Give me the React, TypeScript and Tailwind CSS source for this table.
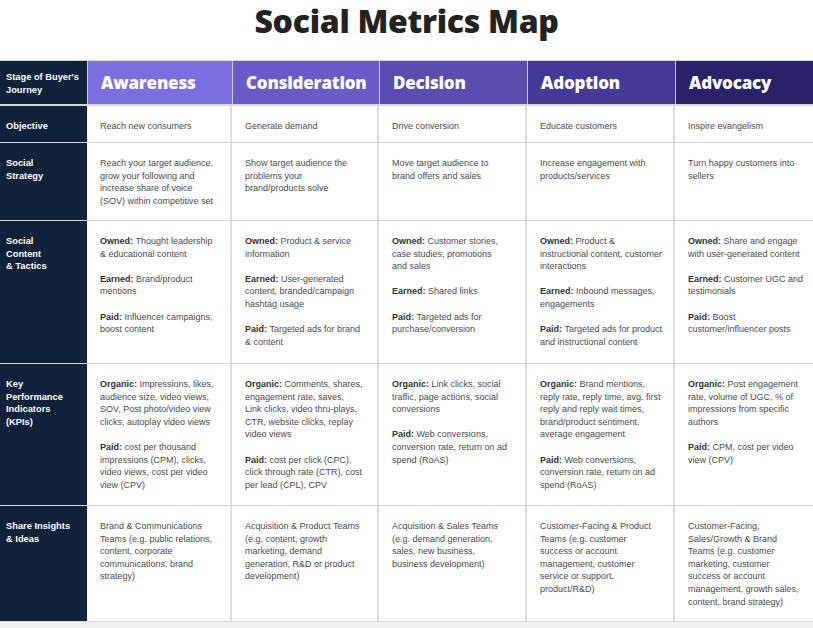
import React from 'react';

type Seg = { tag?: string; text: string };

const STAGES = [
  { name: 'Awareness', bg: 'bg-[#7b6ee0]' },
  { name: 'Consideration', bg: 'bg-[#6a5cc8]' },
  { name: 'Decision', bg: 'bg-[#5a4db0]' },
  { name: 'Adoption', bg: 'bg-[#443996]' },
  { name: 'Advocacy', bg: 'bg-[#2a2268]' },
];

const ROWS: { label: string; height: string; cells: Seg[][] }[] = [
  {
    label: 'Objective',
    height: 'h-[37px]',
    cells: [
      [{ text: 'Reach new consumers' }],
      [{ text: 'Generate demand' }],
      [{ text: 'Drive conversion' }],
      [{ text: 'Educate customers' }],
      [{ text: 'Inspire evangelism' }],
    ],
  },
  {
    label: 'Social\nStrategy',
    height: 'h-[78px]',
    cells: [
      [{ text: 'Reach your target audience,\ngrow your following and\nincrease share of voice\n(SOV) within competitive set' }],
      [{ text: 'Show target audience the\nproblems your\nbrand/products solve' }],
      [{ text: 'Move target audience to\nbrand offers and sales' }],
      [{ text: 'Increase engagement with\nproducts/services' }],
      [{ text: 'Turn happy customers into\nsellers' }],
    ],
  },
  {
    label: 'Social\nContent\n& Tactics',
    height: 'h-[143px]',
    cells: [
      [
        { tag: 'Owned:', text: 'Thought leadership\n& educational content' },
        { tag: 'Earned:', text: 'Brand/product\nmentions' },
        { tag: 'Paid:', text: 'Influencer campaigns,\nboost content' },
      ],
      [
        { tag: 'Owned:', text: 'Product & service\ninformation' },
        { tag: 'Earned:', text: 'User-generated\ncontent, branded/campaign\nhashtag usage' },
        { tag: 'Paid:', text: 'Targeted ads for brand\n& content' },
      ],
      [
        { tag: 'Owned:', text: 'Customer stories,\ncase studies, promotions\nand sales' },
        { tag: 'Earned:', text: 'Shared links' },
        { tag: 'Paid:', text: 'Targeted ads for\npurchase/conversion' },
      ],
      [
        { tag: 'Owned:', text: 'Product &\ninstructional content, customer\ninteractions' },
        { tag: 'Earned:', text: 'Inbound messages,\nengagements' },
        { tag: 'Paid:', text: 'Targeted ads for product\nand instructional content' },
      ],
      [
        { tag: 'Owned:', text: 'Share and engage\nwith user-generated content' },
        { tag: 'Earned:', text: 'Customer UGC and\ntestimonials' },
        { tag: 'Paid:', text: 'Boost\ncustomer/influencer posts' },
      ],
    ],
  },
  {
    label: 'Key\nPerformance\nIndicators\n(KPIs)',
    height: 'h-[142px]',
    cells: [
      [
        { tag: 'Organic:', text: 'Impressions, likes,\naudience size, video views,\nSOV, Post photo/video view\nclicks, autoplay video views' },
        { tag: 'Paid:', text: 'cost per thousand\nimpressions (CPM), clicks,\nvideo views, cost per video\nview (CPV)' },
      ],
      [
        { tag: 'Organic:', text: 'Comments, shares,\nengagement rate, saves,\nLink clicks, video thru-plays,\nCTR, website clicks, replay\nvideo views' },
        { tag: 'Paid:', text: 'cost per click (CPC),\nclick through rate (CTR), cost\nper lead (CPL), CPV' },
      ],
      [
        { tag: 'Organic:', text: 'Link clicks, social\ntraffic, page actions, social\nconversions' },
        { tag: 'Paid:', text: 'Web conversions,\nconversion rate, return on ad\nspend (RoAS)' },
      ],
      [
        { tag: 'Organic:', text: 'Brand mentions,\nreply rate, reply time, avg. first\nreply and reply wait times,\nbrand/product sentiment,\naverage engagement' },
        { tag: 'Paid:', text: 'Web conversions,\nconversion rate, return on ad\nspend (RoAS)' },
      ],
      [
        { tag: 'Organic:', text: 'Post engagement\nrate, volume of UGC, % of\nimpressions from specific\nauthors' },
        { tag: 'Paid:', text: 'CPM, cost per video\nview (CPV)' },
      ],
    ],
  },
  {
    label: 'Share Insights\n& Ideas',
    height: 'h-[116px]',
    cells: [
      [{ text: 'Brand & Communications\nTeams (e.g. public relations,\ncontent, corporate\ncommunications, brand\nstrategy)' }],
      [{ text: 'Acquisition & Product Teams\n(e.g. content, growth\nmarketing, demand\ngeneration, R&D or product\ndevelopment)' }],
      [{ text: 'Acquisition & Sales Teams\n(e.g. demand generation,\nsales, new business,\nbusiness development)' }],
      [{ text: 'Customer-Facing & Product\nTeams (e.g. customer\nsuccess or account\nmanagement, customer\nservice or support,\nproduct/R&D)' }],
      [{ text: 'Customer-Facing,\nSales/Growth & Brand\nTeams (e.g. customer\nmarketing, customer\nsuccess or account\nmanagement, growth sales,\ncontent, brand strategy)' }],
    ],
  },
];

const COL_W = ['w-[145px]', 'w-[147px]', 'w-[148px]', 'w-[148px]', 'w-[148px]'];

const Para = ({ seg }: { seg: Seg }) => {
  const lines = seg.text.split('\n');
  return (
    <div>
      {lines.map((line, i) => (
        <div key={i} className="whitespace-nowrap">
          {i === 0 && seg.tag ? <b className="font-bold text-[#333] mr-[2.5px]">{seg.tag}</b> : null}
          <span>{line}</span>
        </div>
      ))}
    </div>
  );
};

const Cell = ({ segs, width }: { segs: Seg[]; width: string }) => (
  <div className={`${width} shrink-0 border-r-2 border-[#dcdcdc] pl-[13px] pr-2 pt-[14px] flex flex-col gap-[12.6px] text-[9px] leading-[12.6px] text-[#4b4b4b]`}>
    {segs.map((s, i) => (
      <Para key={i} seg={s} />
    ))}
  </div>
);

const Label = ({ text, top }: { text: string; top: string }) => (
  <div className={`w-[87px] shrink-0 bg-[#10213a] pl-[6px] ${top} text-[9.3px] leading-[12.6px] font-bold text-white`}>
    {text.split('\n').map((l) => (
      <div key={l}>{l}</div>
    ))}
  </div>
);

export default function App() {
  return (
    <div className="w-[813px] h-[628px] overflow-hidden bg-white" style={{ fontFamily: '"Liberation Sans", Arial, sans-serif' }}>
      <div className="h-[60px] flex justify-center">
        <h1 className="text-[32px] leading-[42px] font-extrabold text-[#222] tracking-[-0.3px]" style={{ fontFamily: '"Open Sans", sans-serif' }}>
          Social Metrics Map
        </h1>
      </div>

      <div className="border-t border-[#d4d4d4]">
        <div className="flex h-[45px] border-b-2 border-[#d8d8d8]">
          <Label text={"Stage of Buyer's\nJourney"} top="pt-[10px]" />
          {STAGES.map((s, i) => (
            <div key={s.name} className={`${COL_W[i]} ${s.bg} shrink-0 border-l border-[#cfcbe8] flex items-center pl-[13px]`}>
              <span className="text-[17px] font-extrabold text-white tracking-[-0.2px]" style={{ fontFamily: '"Open Sans", sans-serif' }}>
                {s.name}
              </span>
            </div>
          ))}
        </div>

        {ROWS.map((row) => (
          <div key={row.label} className={`flex ${row.height} border-b border-[#d6d6d6]`}>
            <Label text={row.label} top="pt-[14px]" />
            {row.cells.map((segs, i) => (
              <Cell key={i} segs={segs} width={COL_W[i]} />
            ))}
          </div>
        ))}
        <div className="h-[8px] bg-[#efefef]" />
      </div>
    </div>
  );
}
